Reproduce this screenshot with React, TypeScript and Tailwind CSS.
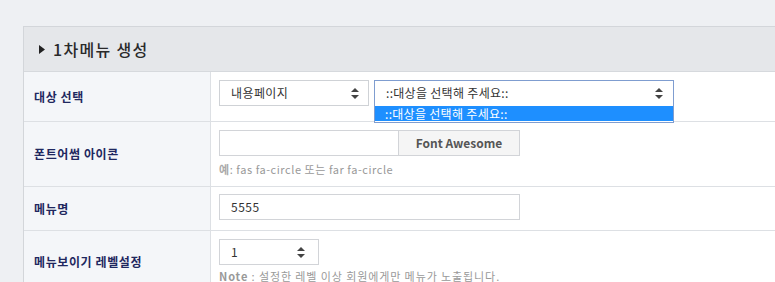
import React from "react";

const font = { fontFamily: '"Noto Sans CJK KR", "Noto Sans", sans-serif' };

function Arrows({ className = "" }: { className?: string }) {
  return (
    <svg width="8" height="11" viewBox="0 0 8 11" className={className}>
      <path d="M4 0 L8 4 L0 4 Z" fill="#444" />
      <path d="M4 11 L8 7 L0 7 Z" fill="#444" />
    </svg>
  );
}

function Label({ children }: { children: React.ReactNode }) {
  return (
    <div className="w-[187px] shrink-0 bg-[#f4f6f9] border-r border-[#dde0e4] flex items-center pl-[10px] text-[12px] font-bold text-[#1f2860] tracking-[0.6px]">
      {children}
    </div>
  );
}

export default function App() {
  return (
    <div className="w-[775px] h-[282px] overflow-hidden bg-[#eef0f3]" style={font}>
      <div className="pt-[26px] pl-[23px]">
        <div className="w-[800px] border-t border-l border-[#d3d6da] bg-white">
          <div className="h-[45px] bg-[#e5e7ea] border-b border-[#d6d9dd] flex items-center pl-[15px]">
            <svg width="6" height="9" viewBox="0 0 6 9" className="mr-[8px]">
              <path d="M0 0 L6 4.5 L0 9 Z" fill="#222" />
            </svg>
            <span className="text-[16px] font-medium text-[#2a2a2a] tracking-[1.3px]">1차메뉴 생성</span>
          </div>

          <div className="flex h-[50px] border-b border-[#dde0e4]">
            <Label>대상 선택</Label>
            <div className="flex items-start pt-[8px] pl-[8px] gap-[5px]">
              <div className="w-[150px] h-[26px] border border-[#cfd2d6] flex items-center justify-between pl-[11px] pr-[9px] text-[12px] text-[#333] tracking-[0.4px]">
                <span>내용페이지</span>
                <Arrows />
              </div>
              <div className="relative w-[300px] h-[26px] border border-[#7f9dd0] flex items-center justify-between pl-[11px] pr-[10px] text-[12px] text-[#333] tracking-[0.3px]">
                <span>::대상을 선택해 주세요::</span>
                <Arrows />
                <div className="absolute left-[-1px] top-[24px] w-[300px] h-[18px] border border-[#7f9dd0] border-t-0 bg-white pt-[1px] z-10">
                  <div className="h-[15px] bg-[#1e8fff] text-white text-[12px] leading-[15px] pl-[10px]">
                    ::대상을 선택해 주세요::
                  </div>
                </div>
              </div>
            </div>
          </div>

          <div className="flex h-[65px] border-b border-[#dde0e4]">
            <Label>폰트어썸 아이콘</Label>
            <div className="pt-[8px] pl-[8px]">
              <div className="flex h-[26px]">
                <div className="w-[180px] h-[26px] border border-[#d2d4d8] bg-white" />
                <div className="w-[121px] h-[26px] border border-l-0 border-[#d2d4d8] bg-[#f5f5f5] flex items-center justify-center text-[12px] font-bold text-[#555]">
                  Font Awesome
                </div>
              </div>
              <div className="mt-[6px] text-[11px] text-[#999] leading-[14px] tracking-[0.55px]">
                <span className="font-bold text-[#aaa]">예</span>: fas fa-circle 또는 far fa-circle
              </div>
            </div>
          </div>

          <div className="flex h-[44px] border-b border-[#dde0e4]">
            <Label>메뉴명</Label>
            <div className="pt-[7px] pl-[8px]">
              <div className="w-[301px] h-[26px] border border-[#d2d4d8] flex items-center pl-[11px] text-[12px] text-[#333] tracking-[0.5px]">
                5555
              </div>
            </div>
          </div>

          <div className="flex h-[62px]">
            <Label>메뉴보이기 레벨설정</Label>
            <div className="pt-[8px] pl-[8px]">
              <div className="w-[100px] h-[26px] border border-[#d2d4d8] flex items-center justify-between pl-[11px] pr-[13px] text-[12px] text-[#333]">
                <span>1</span>
                <Arrows />
              </div>
              <div className="mt-[4px] text-[11px] text-[#999] leading-[14px] tracking-[0.9px]">
                <span className="font-bold text-[#999]">Note</span> : 설정한 레벨 이상 회원에게만 메뉴가 노출됩니다.
              </div>
            </div>
          </div>
        </div>
      </div>
    </div>
  );
}
